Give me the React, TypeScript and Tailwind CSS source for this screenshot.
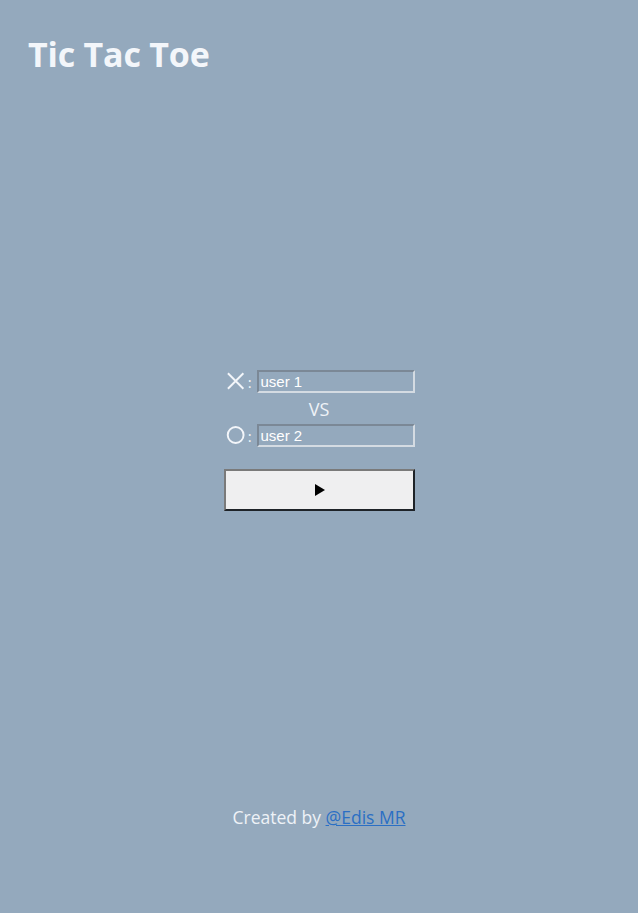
export default function App() {
  return (
    <div className="flex min-h-screen flex-col bg-[#94a9bd] font-['Open_Sans',sans-serif] text-[#f1f4f8]">
      <header className="px-7 pt-[30px]">
        <h1 className="text-[34px] font-bold leading-[48px] tracking-[-0.2px] text-[#f3f6fa]">Tic Tac Toe</h1>
      </header>

      <main className="flex flex-1 items-center justify-center pb-[3px]">
        <div className="flex w-[191px] flex-col">
          {/* player X */}
          <div className="flex items-center">
            <svg viewBox="0 0 20 18" className="ml-[2px] h-[18px] w-[20px]">
              <path d="M2 1 L18 17 M18 1 L2 17" stroke="#f3f6fa" strokeWidth="2" fill="none" />
            </svg>
            <span className="ml-[3px] mt-[3px] w-[9px] text-[15px] leading-none">:</span>
            <input
              defaultValue="user 1"
              className="h-[23px] w-[158px] border-2 border-t-[#7b8896] border-l-[#7b8896] border-r-[#d4dbe2] border-b-[#d4dbe2] bg-transparent px-[2px] font-['Liberation_Sans',sans-serif] text-[15px] text-white outline-none"
            />
          </div>

          <div className="pt-[2px] text-center text-[18px] leading-[29px] text-[#eef2f7]">VS</div>

          {/* player O */}
          <div className="flex items-center">
            <svg viewBox="0 0 20 20" className="ml-[2px] h-[20px] w-[20px]">
              <circle cx="10" cy="10" r="8.2" stroke="#f3f6fa" strokeWidth="2" fill="none" />
            </svg>
            <span className="ml-[3px] mt-[3px] w-[9px] text-[15px] leading-none">:</span>
            <input
              defaultValue="user 2"
              className="h-[23px] w-[158px] border-2 border-t-[#7b8896] border-l-[#7b8896] border-r-[#d4dbe2] border-b-[#d4dbe2] bg-transparent px-[2px] font-['Liberation_Sans',sans-serif] text-[15px] text-white outline-none"
            />
          </div>

          <button className="mt-[22px] flex h-[42px] w-[191px] items-center justify-center border-2 border-t-[#7a7a7a] border-l-[#7a7a7a] border-r-[#1e2328] border-b-[#1e2328] bg-[#efeff0]">
            <svg viewBox="0 0 10 12" className="ml-[2px] h-[12px] w-[10px]">
              <path d="M0 0 L10 6 L0 12 Z" fill="#000" />
            </svg>
          </button>
        </div>
      </main>

      <footer className="pb-[84px] text-center text-[17.5px] leading-[24px] text-[#eef2f7]">
        Created by{" "}
        <a href="#" className="text-[#2b6fc4] underline">
          @Edis MR
        </a>
      </footer>
    </div>
  );
}
